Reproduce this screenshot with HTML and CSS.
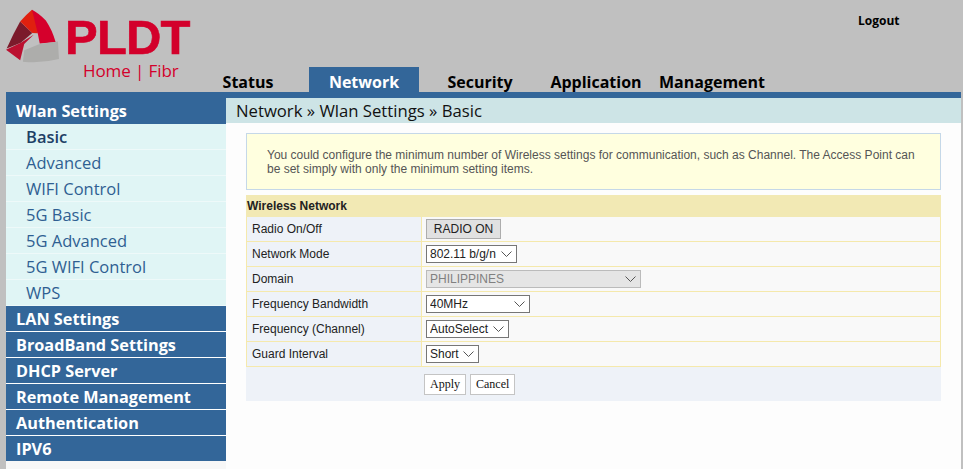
FILE: index.html
```html
<!DOCTYPE html>
<html lang="en">
<head>
<meta charset="utf-8">
<title>Network » Wlan Settings » Basic</title>
<link rel="stylesheet" href="styles.css">
</head>
<body>
<header class="top">
  <div class="logo">
    <svg class="logo-mark" viewBox="18 28 160 160" aria-hidden="true">
      <path d="M60 65 Q40 100 20 145 L62 128 L96 99 Z" fill="#7b1a2b"/>
      <path d="M60 65 Q78 44 95 30 L122 56 L112 100 L96 99 Z" fill="#e0200f"/>
      <path d="M95 30 Q115 40 136 62 Q155 90 165 126 L118 130 L112 100 Z" fill="#d5002c"/>
      <path d="M18 149 L62 128 L100 104 L72 132 L60 180 Z" fill="#bb1030"/>
      <path d="M68 184 L72 150 L118 132 L172 124 L175 176 Q120 190 68 184 Z" fill="#adadab"/>
    </svg>
    <div class="brand">
      <div class="brand-name">PLDT</div>
      <div class="brand-sub">Home | Fibr</div>
    </div>
  </div>
  <nav class="tabs">
    <a class="tab">Status</a>
    <a class="tab tab-active">Network</a>
    <a class="tab">Security</a>
    <a class="tab">Application</a>
    <a class="tab">Management</a>
  </nav>
  <a class="logout">Logout</a>
</header>
<div class="bar"></div>
<div class="body">
  <aside class="side">
    <div class="side-head side-head-first">Wlan Settings</div>
    <ul class="side-list">
      <li class="side-item side-item-active">Basic</li>
      <li class="side-item">Advanced</li>
      <li class="side-item">WIFI Control</li>
      <li class="side-item">5G Basic</li>
      <li class="side-item">5G Advanced</li>
      <li class="side-item">5G WIFI Control</li>
      <li class="side-item">WPS</li>
    </ul>
    <div class="side-head">LAN Settings</div>
    <div class="side-head">BroadBand Settings</div>
    <div class="side-head">DHCP Server</div>
    <div class="side-head">Remote Management</div>
    <div class="side-head">Authentication</div>
    <div class="side-head">IPV6</div>
  </aside>
  <main class="main">
    <h1 class="crumb">Network » Wlan Settings » Basic</h1>
    <div class="content">
      <p class="notice">You could configure the minimum number of Wireless settings for communication, such as Channel. The Access Point can be set simply with only the minimum setting items.</p>
      <table class="form">
        <colgroup><col class="col-label"><col></colgroup>
        <thead>
          <tr><th colspan="2">Wireless Network</th></tr>
        </thead>
        <tbody>
          <tr><td class="label">Radio On/Off</td><td class="field"><button class="radio-btn" type="button">RADIO ON</button></td></tr>
          <tr><td class="label">Network Mode</td><td class="field"><select class="sel sel-mode"><option>802.11 b/g/n</option></select></td></tr>
          <tr><td class="label">Domain</td><td class="field"><select class="sel sel-domain" disabled><option>PHILIPPINES</option></select></td></tr>
          <tr><td class="label">Frequency Bandwidth</td><td class="field"><select class="sel sel-band"><option>40MHz</option></select></td></tr>
          <tr><td class="label">Frequency (Channel)</td><td class="field"><select class="sel sel-chan"><option>AutoSelect</option></select></td></tr>
          <tr><td class="label">Guard Interval</td><td class="field"><select class="sel sel-guard"><option>Short</option></select></td></tr>
        </tbody>
      </table>
      <div class="actions">
        <button class="act" type="button">Apply</button>
        <button class="act" type="button">Cancel</button>
      </div>
    </div>
  </main>
</div>
</body>
</html>
```
FILE: styles.css
```css
* { box-sizing: border-box; }
html, body { height: 100%; }
body {
  margin: 0;
  padding: 0 2px 0 6px;
  background: #c0c0c0;
  font-family: "Liberation Sans", Arial, sans-serif;
  overflow: hidden;
}
.top {
  height: 92px;
  position: relative;
  display: flex;
  align-items: flex-end;
}
.logo {
  width: 184px;
  height: 92px;
  display: flex;
  align-items: flex-start;
  padding-top: 9px;
  flex: none;
}
.logo-mark { width: 54px; height: 54px; flex: none; }
.brand { margin-left: 5px; width: 125px; }
.brand-name {
  font: 700 49px/42px "Liberation Sans", sans-serif;
  letter-spacing: -0.8px;
  color: #d3002b;
  -webkit-text-stroke: 0.6px #d3002b;
  margin-top: 7px;
  height: 42px;
}
.brand-sub {
  font: 400 17px/20px "Open Sans", sans-serif;
  letter-spacing: -0.1px;
  color: #d3002b;
  margin-top: 3px;
  padding-left: 18px;
  white-space: nowrap;
}
.tabs { display: flex; }
.tab {
  width: 110px;
  height: 25px;
  margin: 0 3px;
  text-align: center;
  font: 700 16px/30px "Open Sans", sans-serif;
  color: #000;
  white-space: nowrap;
}
.tab-active { background: #336699; color: #fff; }
.logout {
  position: absolute;
  top: 12px;
  left: 852px;
  font: 700 12px/17px "Open Sans", sans-serif;
  color: #000;
}
.bar { height: 6px; background: #336699; }
.body { display: flex; height: 371px; }
.side { width: 220px; flex: none; background: #f7f7f7; }
.side-head {
  height: 26px;
  background: #336699;
  border-bottom: 1px solid #fff;
  color: #fff;
  font: 700 16.25px/27px "Open Sans", sans-serif;
  padding-left: 10px;
  white-space: nowrap;
}
.side-head:last-child { height: 25px; border-bottom: 0; }
.side-head-first { border-bottom: 0; line-height: 26px; }
.side-list { list-style: none; margin: 0; padding: 0; }
.side-item {
  height: 26px;
  background: #e0f5f5;
  border-bottom: 1px solid #eef9f9;
  color: #2f5f92;
  font: 400 16.5px/26px "Open Sans", sans-serif;
  padding-left: 20px;
  white-space: nowrap;
}
.side-item-active { color: #1e3f66; font-weight: 600; }
.main { flex: 1; min-width: 0; background: #fdfdfd; }
.crumb {
  margin: 0;
  height: 25px;
  background: #cde4e6;
  font: 400 16.7px/25px "Open Sans", sans-serif;
  color: #111;
  padding-left: 10px;
}
.content { padding: 10px 20px 0; }
.notice {
  margin: 0;
  height: 57px;
  padding: 14px 20px 0;
  background: #ffffdf;
  border: 1px solid #c5d8e8;
  font-size: 12px;
  line-height: 14px;
  color: #555;
}
.form {
  width: 100%;
  margin-top: 5px;
  border-collapse: separate;
  border-spacing: 0;
  table-layout: fixed;
  font-size: 12px;
  color: #222;
}
.col-label { width: 175px; }
.form th {
  height: 22px;
  padding: 0 0 0 1px;
  background: #f2e9b4;
  text-align: left;
  font-size: 12px;
  color: #222;
}
.form td {
  height: 25px;
  padding: 0;
  border-bottom: 1px solid #f5e9ac;
  white-space: nowrap;
}
.form .label {
  padding-left: 5px;
  background: #eef2f8;
  border-left: 1px solid #f5e9ac;
}
.form .field {
  padding-left: 4px;
  background: #f9f9f9;
  border-left: 1px solid #f5e9ac;
  border-right: 1px solid #f5e9ac;
}
.radio-btn {
  display: block;
  width: 75px;
  height: 20px;
  padding: 0;
  background: #e1e1e1;
  border: 1px solid #adadad;
  font: 12px "Liberation Sans", sans-serif;
  color: #222;
}
.sel {
  display: block;
  height: 18px;
  padding: 0 0 0 3px;
  appearance: none;
  background: #fff url("data:image/svg+xml,%3Csvg xmlns='http://www.w3.org/2000/svg' width='11' height='6'%3E%3Cpath d='M.5.5l5 5 5-5' fill='none' stroke='%23555' stroke-width='1'/%3E%3C/svg%3E") no-repeat right 4px center;
  border: 1px solid #767676;
  border-radius: 0;
  font: 12px "Liberation Sans", sans-serif;
  color: #222;
}
.sel:disabled {
  background-color: #e5e5e5;
  border-color: #bbb;
  color: #808080;
  opacity: 1;
}
.sel-mode { width: 91px; }
.sel-domain { width: 215px; }
.sel-band { width: 104px; }
.sel-chan { width: 83px; }
.sel-guard { width: 53px; }
.actions {
  height: 34px;
  padding: 7px 0 0 178px;
  background: #eef2f8;
  display: flex;
  align-items: flex-start;
  gap: 4px;
}
.act {
  height: 21px;
  padding: 0 5px;
  background: #fff;
  border: 1px solid #c4c4c4;
  font: 12px "Liberation Serif", serif;
  color: #111;
}
```
